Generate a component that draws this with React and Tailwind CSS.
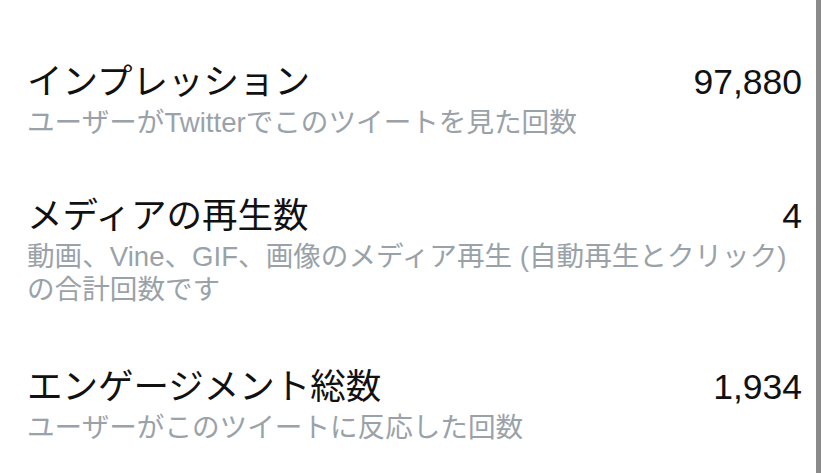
const stats = [
  {
    title: 'インプレッション',
    value: '97,880',
    desc: ['ユーザーがTwitterでこのツイートを見た回数'],
    space: 'mt-[62px]',
  },
  {
    title: 'メディアの再生数',
    value: '4',
    desc: ['動画、Vine、GIF、画像のメディア再生 (自動再生とクリック)', 'の合計回数です'],
    space: 'mt-[57px]',
  },
  {
    title: 'エンゲージメント総数',
    value: '1,934',
    desc: ['ユーザーがこのツイートに反応した回数'],
    space: 'mt-[61px]',
  },
]

function StatRow({ title, value, desc, space }) {
  return (
    <div className={space}>
      <div className="flex items-center justify-between text-[35.5px] leading-[40px] text-[#111]">
        <span>{title}</span>
        <span>{value}</span>
      </div>
      <p className="mt-[4px] text-[27.6px] leading-[33px] text-[#9aa2a9]">
        {desc.map((line, i) => (
          <span key={i} className="block whitespace-nowrap">{line}</span>
        ))}
      </p>
    </div>
  )
}

export default function App() {
  return (
    <div
      className="flex w-[828px] h-[473px] bg-white overflow-hidden"
      style={{ fontFamily: '"Liberation Sans", "Noto Sans CJK JP", sans-serif' }}
    >
      <div className="flex-1 flex flex-col pl-[27px] pr-[14px]">
        {stats.map((s) => (
          <StatRow key={s.title} {...s} />
        ))}
      </div>
      <div className="w-[5px] bg-[#8a8a8a]" />
      <div className="w-[7px] bg-white" />
    </div>
  )
}
